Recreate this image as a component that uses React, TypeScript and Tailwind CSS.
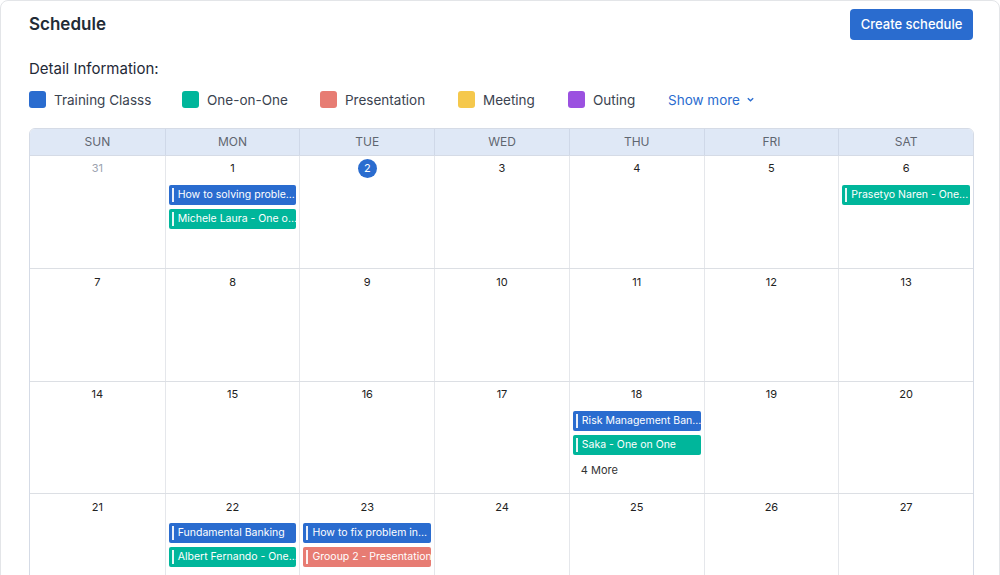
import React from "react";

const C = { blue: "bg-[#2a6ccf]", teal: "bg-[#00b69b]", red: "bg-[#e77c73]" };

type Ev = { t: string; c: string };
const events: Record<string, Ev[]> = {
  "1": [{ t: "How to solving proble...", c: C.blue }, { t: "Michele Laura - One o...", c: C.teal }],
  "6": [{ t: "Prasetyo Naren - One...", c: C.teal }],
  "18": [{ t: "Risk Management Ban...", c: C.blue }, { t: "Saka - One on One", c: C.teal }],
  "22": [{ t: "Fundamental Banking", c: C.blue }, { t: "Albert Fernando - One...", c: C.teal }],
  "23": [{ t: "How to fix problem in...", c: C.blue }, { t: "Grooup 2 - Presentation", c: C.red }],
};

const weeks = [
  ["31", "1", "2", "3", "4", "5", "6"],
  ["7", "8", "9", "10", "11", "12", "13"],
  ["14", "15", "16", "17", "18", "19", "20"],
  ["21", "22", "23", "24", "25", "26", "27"],
];
const days = ["SUN", "MON", "TUE", "WED", "THU", "FRI", "SAT"];

const legend: [string, string, string][] = [
  ["Training Classs", "bg-[#2a6ccf]", "w-[153px]"],
  ["One-on-One", "bg-[#00b69b]", "w-[138px]"],
  ["Presentation", "bg-[#e77c73]", "w-[138px]"],
  ["Meeting", "bg-[#f5c84c]", "w-[110px]"],
  ["Outing", "bg-[#9b51e0]", "w-[100px]"],
];

export default function App() {
  return (
    <div className="w-[1000px] h-[575px] bg-white overflow-hidden" style={{ fontFamily: "Inter, 'Noto Sans', sans-serif" }}>
      <div className="h-[600px] border border-[#e3e5e8] rounded-lg px-7">
        <div className="flex items-center justify-between pt-[8px]">
          <div className="text-[17px] font-semibold text-[#222b36]">Schedule</div>
          <button className="w-[123px] h-[31px] rounded bg-[#2a6ccf] text-white text-[13px] font-medium -mr-[2px]">Create schedule</button>
        </div>
        <div className="mt-[18px] text-[15px] text-[#1f2937]">Detail Information:</div>
        <div className="mt-[9px] flex items-center text-[13.5px] text-[#3b4350]">
          {legend.map(([l, c, w]) => (
            <div key={l} className={`flex items-center gap-[8px] ${w}`}>
              <div className={`w-[17px] h-[17px] rounded-[3px] ${c}`} />
              <span>{l}</span>
            </div>
          ))}
          <div className="flex items-center gap-[6px] text-[#2a6ccf]">
            Show more
            <svg width="9" height="9" viewBox="0 0 10 10"><path d="M2 3.5 5 6.5 8 3.5" stroke="#2a6ccf" strokeWidth="1.5" fill="none" /></svg>
          </div>
        </div>
        <div className="mt-[18px] w-[945px] border border-[#d5dbe6] rounded-t-md overflow-hidden">
          <div className="grid grid-cols-7 bg-[#dfe8f6] h-[27px] border-b border-[#d5dbe6]">
            {days.map((d, i) => (
              <div key={d} className={`flex items-center justify-center text-[12px] text-[#5f6670] ${i > 0 ? "border-l border-[#cfd8e8]" : ""}`}>{d}</div>
            ))}
          </div>
          {weeks.map((w, wi) => (
            <div key={wi} className={`grid grid-cols-7 h-[112.5px] ${wi > 0 ? "border-t border-[#dcdfe4]" : ""}`}>
              {w.map((d, i) => (
                <div key={d} className={`flex flex-col items-stretch pt-[3px] px-[3px] min-w-0 ${i > 0 ? "border-l border-[#e5e7eb]" : ""}`}>
                  <div className="flex justify-center h-[19px] items-center">
                    {d === "2" ? (
                      <div className="w-[19px] h-[19px] rounded-full bg-[#2a6ccf] text-white text-[11px] flex items-center justify-center">2</div>
                    ) : (
                      <span className={`text-[11px] ${d === "31" ? "text-[#9ca3af]" : "text-[#222]"}`}>{d}</span>
                    )}
                  </div>
                  <div className="mt-[7px] flex flex-col gap-[4px]">
                    {(events[d] || []).map((e) => (
                      <div key={e.t} className={`${e.c} h-[20px] rounded-[2px] flex items-center text-white text-[10.5px] pl-[3px] whitespace-nowrap overflow-hidden`}>
                        <div className="w-[2px] h-[14px] bg-white/90 mr-[4px] shrink-0" />
                        {e.t}
                      </div>
                    ))}
                    {d === "18" && <div className="text-[11px] text-[#333] pl-[8px] mt-[3px]">4 More</div>}
                  </div>
                </div>
              ))}
            </div>
          ))}
        </div>
      </div>
    </div>
  );
}
